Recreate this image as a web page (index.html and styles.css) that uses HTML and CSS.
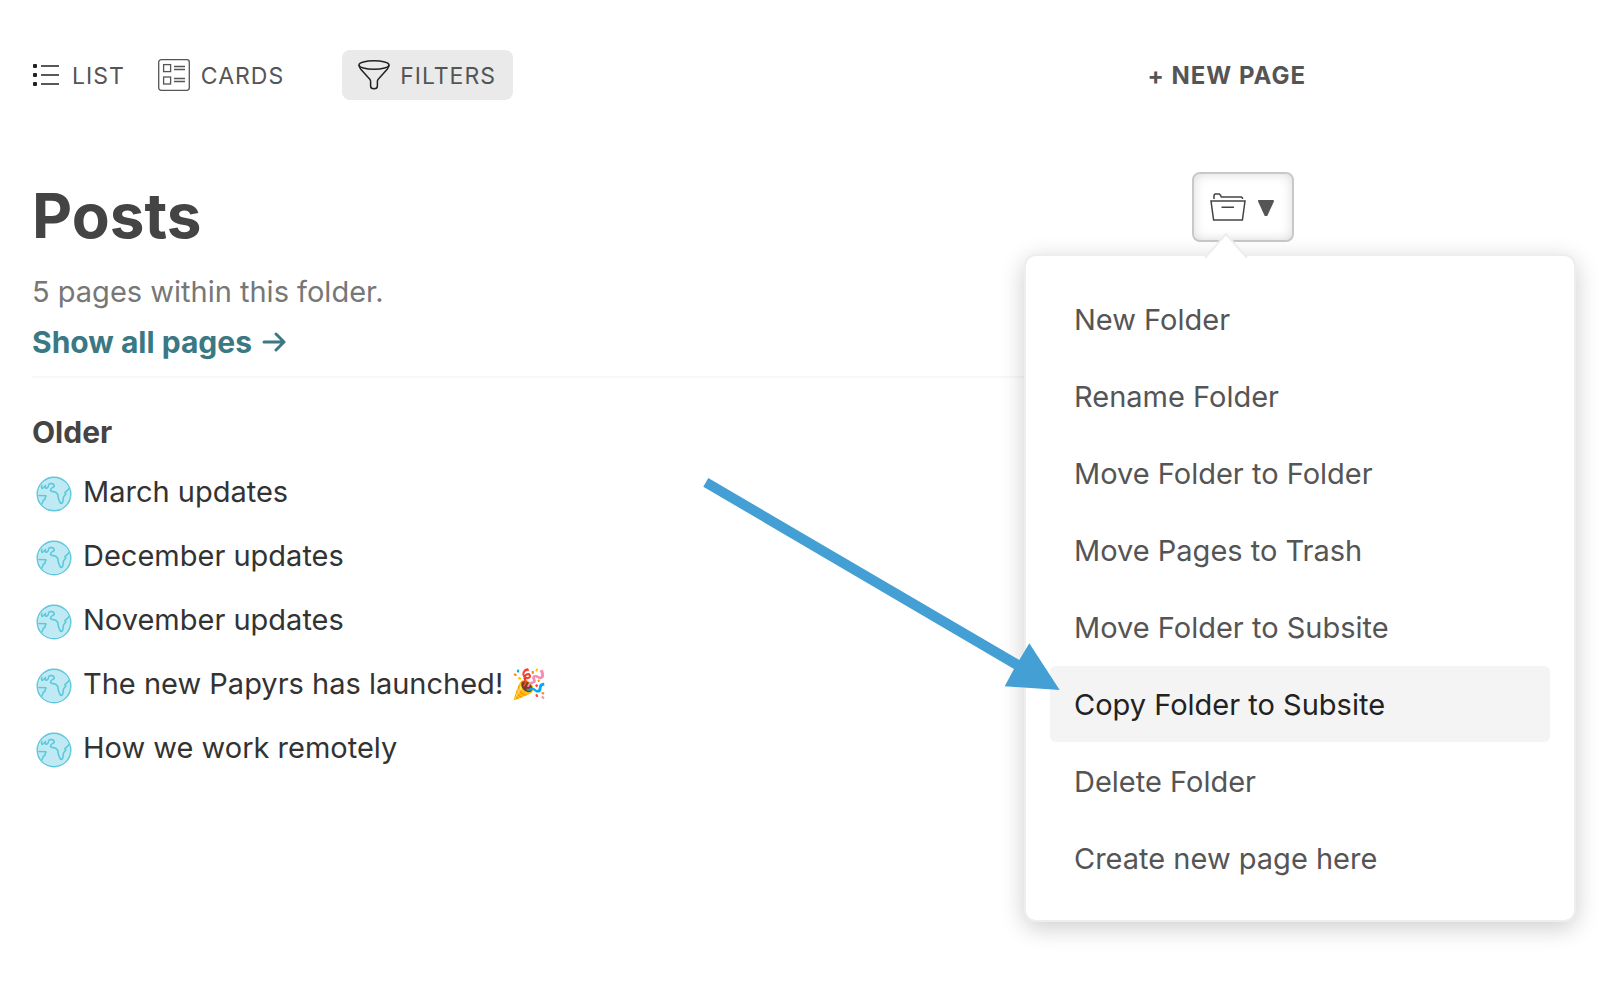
FILE: index.html
```
<!DOCTYPE html>
<html lang="en">
<head>
<meta charset="utf-8">
<title>Posts</title>
<link rel="stylesheet" href="styles.css">
</head>
<body>
<svg class="defs" width="0" height="0" aria-hidden="true">
  <symbol id="globe" viewBox="0 0 36 36">
    <circle cx="18" cy="18" r="16.8" fill="#bfeaf3" stroke="#5cc8db" stroke-width="1.400"/>
    <path d="M6 9.500C4.500 12.500 7 14 9.300 9.500 9 13.500 11.500 13 12.500 10M12.500 8.500c2-1.500 5.500-1.200 5.700 1.200.2 2-3.700 1.800-3.700 4.300 0 2 3.500 1.200 5.500 2.500 1.800 1.200 2.300 2.500 2.200 4.500-.1 1.800 1 2.500 1.400 4.500.4 2 2.400 2.700 3.100.5.600-1.800.2-3.500.9-5 .8-1.800 2.200-2 2.200-3.500-1.200.2-1-1.500.2-2 1.500-.7 1.800-1.700 3-3M3 19.500l7 .3-1.300 3.700-1.200.5-1.500 3.700" fill="none" stroke="#5cc8db" stroke-width="1.600" stroke-linejoin="round" stroke-linecap="round"/>
  </symbol>
</svg>
<header class="toolbar">
  <button class="tool" type="button">
    <svg width="26" height="22" viewBox="0 0 26 22" aria-hidden="true"><g fill="#222"><rect width="4" height="4" rx="1"/><rect y="9" width="4" height="4" rx="1"/><rect y="18" width="4" height="4" rx="1"/></g><path d="M8 2h18M8 11h18M8 20h18" stroke="#222" stroke-width="1.500"/></svg>
    <span>List</span>
  </button>
  <button class="tool tool-cards" type="button">
    <svg width="32" height="32" viewBox="0 0 32 32" fill="none" stroke="#555" stroke-width="1.300" aria-hidden="true"><rect x=".7" y=".7" width="30.600" height="30.600" rx="2.500"/><rect x="5.600" y="5.600" width="7" height="7"/><rect x="5.600" y="18" width="7" height="7"/><path d="M16 7.500h11M16 10.500h11M16 19.500h11M16 22.500h11"/></svg>
    <span>Cards</span>
  </button>
  <button class="tool tool-filters" type="button" aria-pressed="true">
    <svg width="32" height="30" viewBox="0 0 32 30" fill="none" stroke="#222" stroke-width="1.500" stroke-linejoin="round" aria-hidden="true"><ellipse cx="16" cy="5" rx="15" ry="4.200"/><path d="M1 5c0 2 .6 2.800 1.800 4.200l9 10c.6.700.8 1.200.8 2V26c0 1.800 1 2.800 3.400 2.800s3.400-1 3.400-2.800v-4.800c0-.8.2-1.300.8-2l9-10C30.400 7.800 31 7 31 5"/></svg>
    <span>Filters</span>
  </button>
  <button class="tool new-page" type="button"><span>+ New page</span></button>
</header>
<main class="content">
  <div class="heading">
    <h1>Posts</h1>
    <div class="folder-actions">
      <button class="folder-button" type="button" aria-label="Folder actions" aria-expanded="true">
        <svg width="36" height="28" viewBox="0 0 36 28" fill="none" stroke="#444" stroke-width="1.500" aria-hidden="true"><path d="M1 8h34l-2.600 19H3.600zM11.500 14.300h12.500M4 6V2.200L5 1h4.300l1.200 1.200.8 1.800H31.500l1 1V6"/></svg>
        <svg width="18" height="20" viewBox="0 0 18 20" aria-hidden="true"><path d="M2 4h14L9.600 18H8.400z" fill="#555" stroke="#555" stroke-width="2" stroke-linejoin="round"/></svg>
      </button>
      <div class="menu">
        <svg class="menu-pointer" width="44" height="26" viewBox="0 0 44 26" aria-hidden="true"><path d="M1 26L22 2l21 24" fill="#fff" stroke="#eee" stroke-width="2"/></svg>
        <button type="button">New Folder</button>
        <button type="button">Rename Folder</button>
        <button type="button">Move Folder to Folder</button>
        <button type="button">Move Pages to Trash</button>
        <button type="button">Move Folder to Subsite</button>
        <button class="is-active" type="button">Copy Folder to Subsite</button>
        <button type="button">Delete Folder</button>
        <button type="button">Create new page here</button>
      </div>
      <svg class="callout-arrow" width="360" height="216" viewBox="0 0 360 216" aria-hidden="true"><path d="M6.300 2L317.300 184l10-16.700L357.700 214l-55-3.700 9.300-17.300L1.300 10.700z" fill="#44a0d4"/></svg>
    </div>
  </div>
  <p class="summary">5 pages within this folder.</p>
  <a class="show-all" href="#"><span>Show all pages</span><svg width="24" height="20" viewBox="0 0 24 20" fill="none" stroke="#3a7883" stroke-width="3" stroke-linecap="round" stroke-linejoin="round" aria-hidden="true"><path d="M2 10h20M14 2l8 8-8 8"/></svg></a>
  <section class="group">
    <h2>Older</h2>
    <ul class="pages">
      <li><a href="#"><svg class="globe" aria-hidden="true"><use href="#globe"/></svg>March updates</a></li>
      <li><a href="#"><svg class="globe" aria-hidden="true"><use href="#globe"/></svg>December updates</a></li>
      <li><a href="#"><svg class="globe" aria-hidden="true"><use href="#globe"/></svg>November updates</a></li>
      <li><a href="#"><svg class="globe" aria-hidden="true"><use href="#globe"/></svg>The new Papyrs has launched! 🎉</a></li>
      <li><a href="#"><svg class="globe" aria-hidden="true"><use href="#globe"/></svg>How we work remotely</a></li>
    </ul>
  </section>
</main>
</body>
</html>
```
FILE: styles.css
```
* {
  box-sizing: border-box;
}

body {
  min-height: 100vh;
  margin: 0;
  padding: 50px 34px 50px 32px;
  background: #fff;
  color: #333;
  font-family: Inter, "Liberation Sans", sans-serif;
  font-size: 29px;
  line-height: 40px;
}

button {
  border: 0;
  background: none;
  color: inherit;
  font: inherit;
  cursor: pointer;
}

a {
  color: inherit;
  text-decoration: none;
}

svg {
  flex: none;
}

.defs {
  position: absolute;
}

.toolbar {
  display: flex;
  align-items: center;
  height: 50px;
}

.tool {
  display: flex;
  align-items: center;
  gap: 13px;
  height: 50px;
  padding: 0 1px;
  color: #555;
  font-size: 23px;
  letter-spacing: 1px;
  text-transform: uppercase;
  white-space: nowrap;
}

.tool span {
  padding-top: 2px;
}

.tool-cards {
  margin-left: 31px;
  gap: 11px;
}

.tool-filters {
  margin-left: 57px;
  padding: 0 17px 0 16px;
  gap: 10px;
  border-radius: 8px;
  background: #eaeaea;
}

.new-page {
  margin-left: auto;
  margin-right: 269px;
  font-size: 24px;
  font-weight: 700;
}

.content {
  padding-top: 72px;
}

.heading {
  display: flex;
  justify-content: space-between;
  align-items: flex-start;
}

h1 {
  margin: 0;
  padding-top: 4px;
  color: #444;
  font-size: 62px;
  line-height: 80px;
}

.folder-actions {
  position: relative;
  margin-right: 282px;
}

.folder-button {
  display: flex;
  align-items: center;
  justify-content: center;
  gap: 11px;
  width: 102px;
  height: 70px;
  padding: 0 2px 0 0;
  border: 2px solid #c8c8cc;
  border-radius: 8px;
  background: #fff;
  box-shadow: inset 0 0 12px rgba(0, 0, 0, 0.15);
}

.menu {
  position: absolute;
  top: 82px;
  right: -282px;
  display: flex;
  flex-direction: column;
  gap: 1px;
  width: 552px;
  padding: 25px 24px 24px;
  border: 2px solid #eee;
  border-radius: 12px;
  background: #fff;
  box-shadow: 0 6px 24px rgba(0, 0, 0, 0.2);
}

.menu-pointer {
  position: absolute;
  top: -24px;
  left: 178px;
}

.menu button {
  height: 76px;
  padding: 2px 24px 0;
  border-radius: 6px;
  color: #555;
  text-align: left;
}

.menu .is-active {
  background: #f4f4f4;
  color: #222;
}

.callout-arrow {
  position: absolute;
  top: 304px;
  left: -490px;
}

.summary {
  margin: 16px 0 10px;
  color: #777;
}

.show-all {
  display: flex;
  align-items: center;
  gap: 10px;
  color: #3a7883;
  font-size: 30px;
  font-weight: 700;
}

.group {
  margin-top: 14px;
  padding-top: 34px;
  border-top: 2px solid #f8f8f8;
}

h2 {
  margin: 0 0 8px;
  color: #444;
  font-size: 30px;
  font-weight: 700;
  line-height: 40px;
}

.pages {
  margin: 0;
  padding: 0 0 0 4px;
  list-style: none;
}

.pages a {
  display: flex;
  align-items: center;
  gap: 11px;
  height: 64px;
}

.globe {
  width: 36px;
  height: 36px;
  margin-top: 4px;
}
```
